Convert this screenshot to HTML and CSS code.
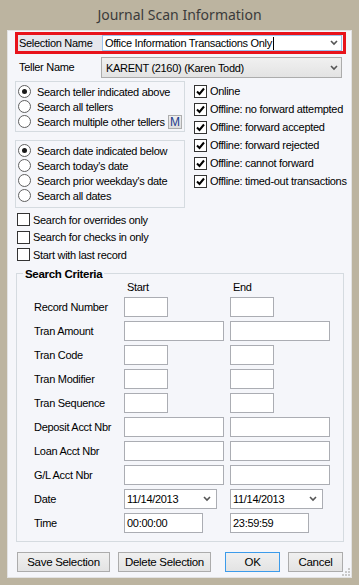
FILE: index.html
```html
<!DOCTYPE html>
<html>

<head>
    <meta charset="utf-8">
    <title>Journal Scan Information</title>
    <link rel="stylesheet" href="styles.css">
</head>

<body>
    <div class="window">
        <div class="title">Journal Scan Information</div>

        <div class="panel">
            <!-- selection name, highlighted -->
            <div class="sel-row">
                <span class="sel-label">Selection Name</span>
                <div class="combo">
                    <span>Office Information Transactions Only</span><span class="caret"></span>
                    <svg class="chev" width="8" height="6" viewBox="0 0 8 6"><polyline points="1,1 4,4 7,1" /></svg>
                </div>
            </div>

            <div class="teller-row">
                <span class="teller-label">Teller Name</span>
                <div class="select">
                    <span>KARENT (2160) (Karen Todd)</span>
                    <svg class="chev" width="8" height="6" viewBox="0 0 8 6"><polyline points="1,1 4,4 7,1" /></svg>
                </div>
            </div>

            <div class="options">
                <div class="left-col">
                    <div class="group">
                        <div class="radio-row"><span class="radio checked"></span>Search teller indicated above</div>
                        <div class="radio-row"><span class="radio"></span>Search all tellers</div>
                        <div class="radio-row"><span class="radio"></span>Search multiple other tellers<span class="m-btn">M</span></div>
                    </div>
                    <div class="group group-dates">
                        <div class="radio-row"><span class="radio checked"></span>Search date indicated below</div>
                        <div class="radio-row"><span class="radio"></span>Search today's date</div>
                        <div class="radio-row"><span class="radio"></span>Search prior weekday's date</div>
                        <div class="radio-row"><span class="radio"></span>Search all dates</div>
                    </div>
                </div>
                <div class="right-col">
                    <div class="check-row"><span class="box"><svg viewBox="0 0 11 11"><polyline points="2,5.5 4.5,8 9,2.5" /></svg></span>Online</div>
                    <div class="check-row"><span class="box"><svg viewBox="0 0 11 11"><polyline points="2,5.5 4.5,8 9,2.5" /></svg></span>Offline: no forward attempted</div>
                    <div class="check-row"><span class="box"><svg viewBox="0 0 11 11"><polyline points="2,5.5 4.5,8 9,2.5" /></svg></span>Offline: forward accepted</div>
                    <div class="check-row"><span class="box"><svg viewBox="0 0 11 11"><polyline points="2,5.5 4.5,8 9,2.5" /></svg></span>Offline: forward rejected</div>
                    <div class="check-row"><span class="box"><svg viewBox="0 0 11 11"><polyline points="2,5.5 4.5,8 9,2.5" /></svg></span>Offline: cannot forward</div>
                    <div class="check-row"><span class="box"><svg viewBox="0 0 11 11"><polyline points="2,5.5 4.5,8 9,2.5" /></svg></span>Offline: timed-out transactions</div>
                </div>
            </div>

            <div class="lower-checks">
                <div class="check-row short"><span class="box"></span>Search for overrides only</div>
                <div class="check-row short"><span class="box"></span>Search for checks in only</div>
                <div class="check-row short"><span class="box"></span>Start with last record</div>
            </div>

            <fieldset class="criteria">
                <legend>Search Criteria</legend>
                <div class="crit-grid">
                    <span></span><span class="col-head">Start</span><span class="col-head">End</span>

                    <span class="lbl">Record Number</span><span class="field w44"></span><span class="field w44"></span>
                    <span class="lbl">Tran Amount</span><span class="field w100"></span><span class="field w100"></span>
                    <span class="lbl">Tran Code</span><span class="field w44"></span><span class="field w44"></span>
                    <span class="lbl">Tran Modifier</span><span class="field w44"></span><span class="field w44"></span>
                    <span class="lbl">Tran Sequence</span><span class="field w44"></span><span class="field w44"></span>
                    <span class="lbl">Deposit Acct Nbr</span><span class="field w100"></span><span class="field w100"></span>
                    <span class="lbl">Loan Acct Nbr</span><span class="field w100"></span><span class="field w100"></span>
                    <span class="lbl">G/L Acct Nbr</span><span class="field w100"></span><span class="field w100"></span>

                    <span class="lbl">Date</span>
                    <span class="field w93 date">11/14/2013<svg class="chev" width="8" height="6" viewBox="0 0 8 6"><polyline points="1,1 4,4 7,1" /></svg></span>
                    <span class="field w93 date">11/14/2013<svg class="chev" width="8" height="6" viewBox="0 0 8 6"><polyline points="1,1 4,4 7,1" /></svg></span>

                    <span class="lbl">Time</span><span class="field w79">00:00:00</span><span class="field w79">23:59:59</span>
                </div>
            </fieldset>

            <div class="buttons">
                <button class="btn save">Save Selection</button>
                <button class="btn delete">Delete Selection</button>
                <button class="btn ok">OK</button>
                <button class="btn cancel">Cancel</button>
            </div>

            <svg class="grip" width="8" height="8" viewBox="0 0 8 8">
                <rect x="6" y="0" width="2" height="2" />
                <rect x="3" y="3" width="2" height="2" />
                <rect x="6" y="3" width="2" height="2" />
                <rect x="0" y="6" width="2" height="2" />
                <rect x="3" y="6" width="2" height="2" />
                <rect x="6" y="6" width="2" height="2" />
            </svg>
        </div>
    </div>
</body>

</html>
```

FILE: styles.css
```css
/* vars */
:root {
    --frame: #bcb4a0;
    --panel: #f5f6fa;
    --group-line: #d5dbe0;
    --field-line: #abadb3;
    --highlight: #e8131b;
}

* {
    box-sizing: border-box;
}

body {
    margin: 0;
    width: 359px;
    height: 585px;
    overflow: hidden;
    background: var(--frame);
    font-family: "Liberation Sans", Arial, sans-serif;
    font-size: 11px;
    letter-spacing: -0.3px;
    color: #000;
}

.window {
    display: flex;
    flex-direction: column;
    height: 585px;
}

.title {
    height: 30px;
    line-height: 29px;
    text-align: center;
    font-family: "Noto Sans", "Open Sans", sans-serif;
    font-size: 14px;
    letter-spacing: 0;
    color: #3b3b3b;
}

.panel {
    position: relative;
    margin: 0 7px;
    height: 548px;
    background: var(--panel);
    border: 1px solid #e2e2e2;
    padding: 1px 0 0 7px;
}

.chev {
    fill: none;
    stroke: #555;
    stroke-width: 1.6;
}

/* selection name */
.sel-row {
    display: flex;
    width: 331px;
    height: 22px;
    border: 3px solid var(--highlight);
}

.sel-label {
    width: 84px;
    padding-left: 1px;
    line-height: 16px;
    background: #e6e7ed;
}

.combo {
    flex: 1;
    display: flex;
    align-items: center;
    margin-right: 1px;
    padding-left: 2px;
    background: #fff;
    border: 1px solid #9cc3ec;
}

.caret {
    width: 1px;
    height: 13px;
    margin-left: 1px;
    background: #000;
}

.combo .chev,
.select .chev {
    margin-left: auto;
    margin-right: 3px;
}

/* teller name */
.teller-row {
    display: flex;
    margin-top: 3px;
    height: 21px;
}

.teller-label {
    width: 86px;
    padding-left: 4px;
    line-height: 21px;
}

.select {
    width: 241px;
    display: flex;
    align-items: center;
    padding-left: 4px;
    background: linear-gradient(#f0f0f0, #e3e3e3);
    border: 1px solid #acacac;
}

/* radio groups + status checks */
.options {
    display: flex;
    margin-top: 3px;
}

.left-col {
    width: 170px;
    display: flex;
    flex-direction: column;
    gap: 8px;
}

.group {
    border: 1px solid var(--group-line);
    padding: 2px;
}

.group-dates {
    padding-bottom: 4px;
}

.radio-row {
    display: flex;
    align-items: center;
    height: 15px;
    white-space: nowrap;
}

.radio {
    width: 13px;
    height: 13px;
    margin-right: 6px;
    border: 1px solid #5f5f5f;
    border-radius: 50%;
    background: #fff;
    display: flex;
    align-items: center;
    justify-content: center;
    flex-shrink: 0;
}

.radio.checked::after {
    content: "";
    width: 5px;
    height: 5px;
    border-radius: 50%;
    background: #1a1a1a;
}

.m-btn {
    margin-left: auto;
    width: 14px;
    height: 14px;
    line-height: 12px;
    text-align: center;
    font-size: 12px;
    letter-spacing: 0;
    color: #1c3b8c;
    background: linear-gradient(#eeeeee, #dedede);
    border: 1px solid #adadad;
}

.right-col {
    margin-left: 9px;
    padding-top: 1px;
}

.check-row {
    display: flex;
    align-items: center;
    height: 18px;
    white-space: nowrap;
}

.box {
    width: 13px;
    height: 13px;
    margin-right: 3px;
    border: 1px solid #333;
    background: #fff;
    flex-shrink: 0;
}

.box svg {
    display: block;
    width: 11px;
    height: 11px;
    fill: none;
    stroke: #000;
    stroke-width: 2;
}

.lower-checks {
    margin: 3px 0 0 2px;
}

.check-row.short {
    height: 17.5px;
}

/* search criteria */
.criteria {
    margin: 3px 0 0 1px;
    width: 328px;
    height: 275px;
    padding: 0 0 0 17px;
    border: 1px solid var(--group-line);
}

.criteria legend {
    margin-left: -11px;
    padding: 0 2px;
    font-size: 11.5px;
    font-weight: bold;
    line-height: 14px;
}

.crit-grid {
    display: grid;
    grid-template-columns: 90px 106px auto;
    grid-template-rows: 12px;
    grid-auto-rows: 20px;
    row-gap: 4px;
    align-items: center;
}

.col-head {
    padding-left: 3px;
    line-height: 12px;
}

.crit-grid > :nth-child(-n+3) {
    margin-bottom: -1px;
}

.field {
    display: flex;
    align-items: center;
    height: 20px;
    padding-left: 2px;
    background: #fff;
    border: 1px solid var(--field-line);
}

.w44 {
    width: 44px;
}

.w100 {
    width: 100px;
}

.w93 {
    width: 93px;
}

.w79 {
    width: 79px;
}

.date .chev {
    margin-left: auto;
    margin-right: 5px;
}

/* buttons */
.buttons {
    display: flex;
    margin: 10px 0 0 2px;
}

.btn {
    height: 20px;
    padding: 0;
    font-family: "Liberation Sans", Arial, sans-serif;
    font-size: 11.5px;
    letter-spacing: -0.3px;
    color: #000;
    background: linear-gradient(#f0f0f0, #e3e3e3);
    border: 1px solid #acacac;
}

.save {
    width: 93px;
}

.delete {
    width: 93px;
    margin-left: 8px;
}

.ok {
    width: 55px;
    margin-left: 14px;
    border-color: #3c9bea;
}

.cancel {
    width: 55px;
    margin-left: 8px;
}

.grip {
    position: absolute;
    right: 1px;
    bottom: 1px;
    fill: #c9c9c9;
}
```
